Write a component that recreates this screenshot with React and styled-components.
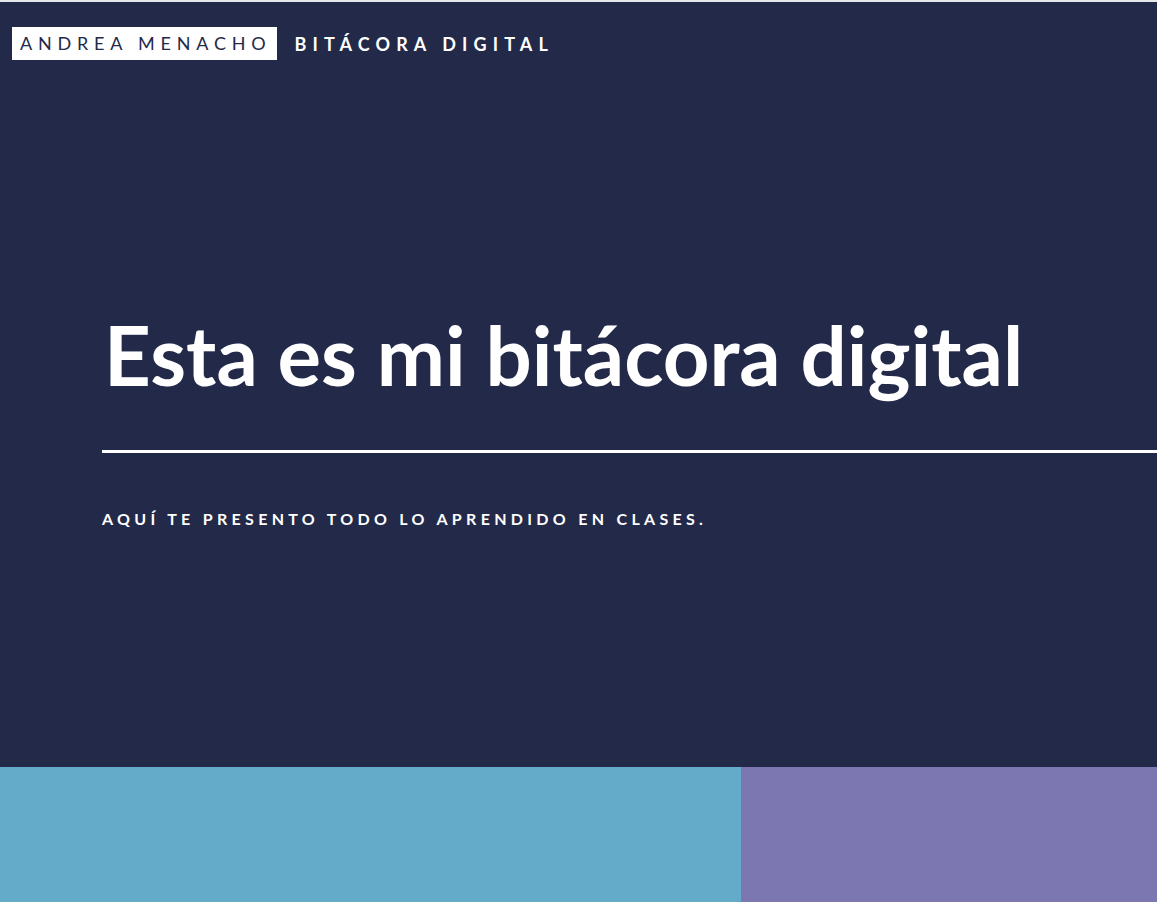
import React from 'react'
import styled, { createGlobalStyle } from 'styled-components'

const GlobalStyle = createGlobalStyle`
  html, body {
    margin: 0;
    padding: 0;
    background: #ffffff;
  }
  body {
    font-family: Lato, "Noto Sans", sans-serif;
  }
`

const Page = styled.div`
  width: 100%;
  height: 902px;
  overflow: hidden;
  display: flex;
  flex-flow: column;
  border-top: 2px solid #e6e7ea;
  box-sizing: border-box;
`

const Hero = styled.section`
  background: #232949;
  height: 765px;
  display: flex;
  flex-flow: column;
  box-sizing: border-box;
  padding: 25px 0 0 0;
`

const Nav = styled.nav`
  display: flex;
  align-items: center;
  padding-left: 12px;
  gap: 18px;
`

const Brand = styled.div`
  background: #ffffff;
  color: #232949;
  font-size: 18px;
  letter-spacing: 5.8px;
  height: 33px;
  line-height: 33px;
  padding: 0 5px 0 8px;
`

const NavTitle = styled.div`
  color: #ffffff;
  font-size: 18px;
  font-weight: 700;
  letter-spacing: 6.1px;
`

const Content = styled.div`
  padding: 254px 0 0 102px;
`

const Title = styled.h1`
  color: #ffffff;
  font-size: 81.5px;
  font-weight: 700;
  margin: 0;
  line-height: 1;
  padding-left: 2px;
`

const Rule = styled.hr`
  border: 0;
  height: 3px;
  background: #ffffff;
  margin: 54px 0 0 0;
`

const Lead = styled.p`
  color: #ffffff;
  font-size: 16px;
  font-weight: 700;
  letter-spacing: 4.3px;
  margin: 56px 0 0 0;
`

const Blocks = styled.div`
  flex: 1;
  display: grid;
  grid-template-columns: 741px 1fr;
`

const Block = styled.div`
  background: ${p => p.color};
`

export default function App() {
  return (
    <>
      <GlobalStyle />
      <Page>
        <Hero>
          <Nav>
            <Brand>ANDREA MENACHO</Brand>
            <NavTitle>BITÁCORA DIGITAL</NavTitle>
          </Nav>
          <Content>
            <Title>Esta es mi bitácora digital</Title>
            <Rule />
            <Lead>AQUÍ TE PRESENTO TODO LO APRENDIDO EN CLASES.</Lead>
          </Content>
        </Hero>
        <Blocks>
          <Block color="#63abc8" />
          <Block color="#7c77b0" />
        </Blocks>
      </Page>
    </>
  )
}
